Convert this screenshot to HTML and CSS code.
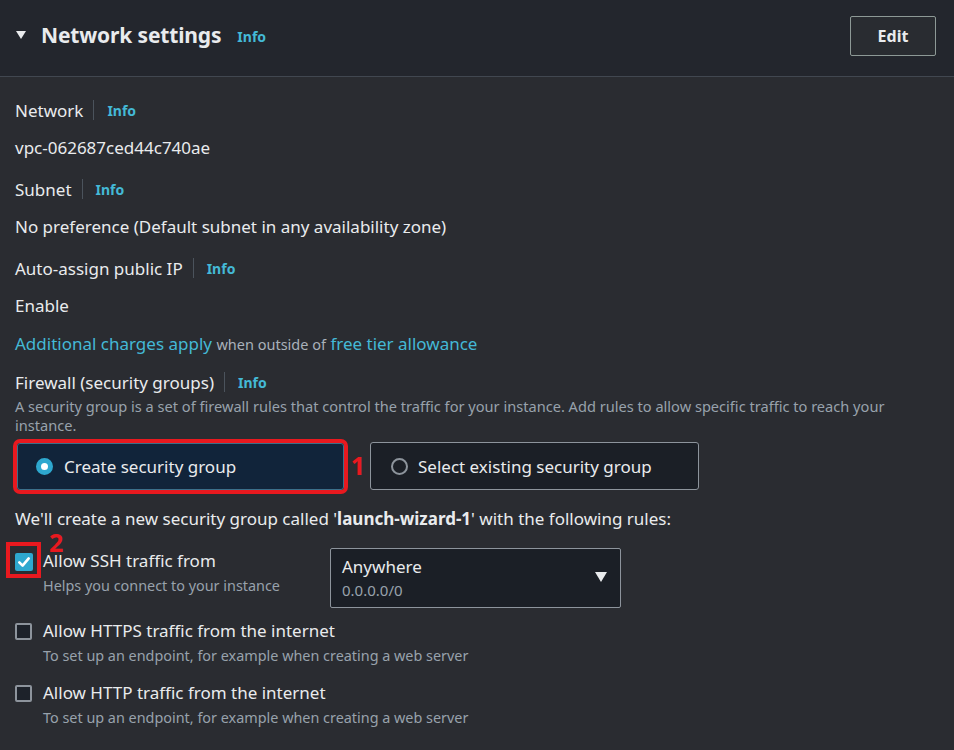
FILE: index.html
```html
<!DOCTYPE html>
<html>
<head>
<meta charset="utf-8">
<link rel="stylesheet" href="styles.css">
</head>
<body>
<div class="panel">
  <header class="head">
    <div class="title-wrap">
      <span class="caret-down"></span>
      <h2 class="title">Network settings</h2>
      <a class="info info-head">Info</a>
    </div>
    <button class="edit">Edit</button>
  </header>
  <div class="content">
    <div class="field">
      <div class="label-row"><span class="label">Network</span><span class="sep"></span><a class="info">Info</a></div>
      <div class="value">vpc-062687ced44c740ae</div>
    </div>
    <div class="field">
      <div class="label-row"><span class="label">Subnet</span><span class="sep"></span><a class="info">Info</a></div>
      <div class="value">No preference (Default subnet in any availability zone)</div>
    </div>
    <div class="field field-last">
      <div class="label-row"><span class="label">Auto-assign public IP</span><span class="sep"></span><a class="info">Info</a></div>
      <div class="value">Enable</div>
    </div>
    <div class="charges"><a class="link">Additional charges apply</a> <span class="small">when outside of</span> <a class="link">free tier allowance</a></div>
    <div class="fw">
      <div class="label-row"><span class="label">Firewall (security groups)</span><span class="sep"></span><a class="info">Info</a></div>
      <div class="desc">A security group is a set of firewall rules that control the traffic for your instance. Add rules to allow specific traffic to reach your instance.</div>
    </div>
    <div class="tiles">
      <div class="tile tile-on">
        <span class="radio radio-on"></span><span class="tile-text">Create security group</span>
        <span class="mark mark-1">1</span>
      </div>
      <div class="tile tile-off">
        <span class="radio"></span><span class="tile-text">Select existing security group</span>
      </div>
    </div>
    <p class="create-note">We'll create a new security group called '<b>launch-wizard-1</b>' with the following rules:</p>
    <div class="rule rule-ssh">
      <div class="check-row check-ssh">
        <span class="cb cb-on"><svg width="18" height="18" viewBox="0 0 18 18"><path d="M4.3 9.3 L7.6 12.6 L13.7 5.4" fill="none" stroke="#fff" stroke-width="2.6" stroke-linecap="round" stroke-linejoin="round"/></svg><span class="redbox"></span><span class="mark mark-2">2</span></span>
        <div class="rule-text">
          <div class="rule-label">Allow SSH traffic from</div>
          <div class="rule-desc">Helps you connect to your instance</div>
        </div>
      </div>
      <div class="select">
        <div class="sel-text">
          <div class="sel-main">Anywhere</div>
          <div class="sel-sub">0.0.0.0/0</div>
        </div>
        <span class="sel-caret"></span>
      </div>
    </div>
    <div class="rule rule-https">
      <div class="check-row">
        <span class="cb"></span>
        <div class="rule-text">
          <div class="rule-label">Allow HTTPS traffic from the internet</div>
          <div class="rule-desc">To set up an endpoint, for example when creating a web server</div>
        </div>
      </div>
    </div>
    <div class="rule rule-http">
      <div class="check-row">
        <span class="cb"></span>
        <div class="rule-text">
          <div class="rule-label">Allow HTTP traffic from the internet</div>
          <div class="rule-desc">To set up an endpoint, for example when creating a web server</div>
        </div>
      </div>
    </div>
  </div>
</div>
</body>
</html>
```
FILE: styles.css
```css
* { box-sizing: border-box; }
html, body { margin: 0; padding: 0; }
body {
  background: #2a2c31;
  font-family: "Noto Sans", "Open Sans", sans-serif;
  color: #e9ebed;
  width: 954px;
  height: 750px;
  overflow: hidden;
}
.panel { width: 954px; }
.head {
  height: 77px;
  background: #23262d;
  border-bottom: 1px solid #414750;
  display: flex;
  align-items: flex-start;
  justify-content: space-between;
  padding: 16px 18px 0 16px;
}
.title-wrap { display: flex; align-items: center; height: 38px; }
.caret-down {
  width: 0; height: 0;
  border-left: 5.5px solid transparent;
  border-right: 5.5px solid transparent;
  border-top: 8px solid #e9ebed;
  margin-right: 15px;
  margin-top: -1px;
}
.title {
  margin: 0;
  font-size: 21px;
  font-weight: 700;
  color: #e9ebed;
  letter-spacing: -0.15px;
}
.info {
  color: #44b9d6;
  font-weight: 700;
  font-size: 14px;
}
.info-head { margin-left: 16px; margin-top: 3px; }
.edit {
  width: 86px;
  height: 40px;
  background: #292c31;
  border: 1px solid #8d9996;
  border-radius: 2px;
  color: #e9ebed;
  font-family: inherit;
  font-weight: 700;
  font-size: 16px;
  padding: 0;
}
.content { padding: 21px 18px 0 15px; }
.field { padding-bottom: 3px; }
.field-last { padding-bottom: 0; }
.label-row { display: flex; align-items: center; height: 24px; }
.label { font-size: 17px; color: #e9ebed; }
.sep { width: 1px; height: 20px; background: #4b535c; margin: 0 13px 0 10px; }
.value { font-size: 17px; line-height: 24px; margin-top: 14px; margin-bottom: 14px; }
.charges { font-size: 17px; line-height: 24px; margin-bottom: 14px; }
.link { color: #44b9d6; }
.small { font-size: 14.5px; color: #a9b1ba; }
.fw .desc { font-size: 14.6px; line-height: 19px; color: #98a2ac; margin-top: 3px; }
.tiles { display: flex; gap: 26px; margin-top: 7px; }
.tile {
  position: relative;
  display: flex;
  align-items: center;
  border-radius: 3px;
  font-size: 17px;
}
.tile-on {
  background: #11243a;
  border: 1px solid #3b6f8a;
  outline: 4px solid #e8191f;
  outline-offset: 0px;
  width: 327px;
  height: 47px;
  margin-left: 2px;
  margin-top: 1px;
  padding-left: 18px;
}
.tile-off {
  background: #1b1f26;
  border: 1px solid #8d949c;
  width: 329px;
  height: 48px;
  padding-left: 20px;
}
.radio {
  width: 17px; height: 17px;
  border-radius: 50%;
  border: 2px solid #8d949c;
  margin-right: 10px;
  flex: none;
}
.radio-on {
  border: 5px solid #2ea8cf;
  background: #fff;
  margin-right: 11px;
}
.tile-text { color: #e9ebed; }
.mark {
  position: absolute;
  color: #e8191f;
  font-weight: 700;
  font-size: 25px;
  line-height: 1;
}
.mark-1 { right: -22px; top: 9px; }
.create-note { margin: 17px 0 0 0; font-size: 17px; line-height: 24px; }
.create-note b { font-weight: 700; }
.rule { display: flex; }
.rule-ssh { margin-top: 17px; }
.rule-https { margin-top: 10px; }
.rule-http { margin-top: 14px; }
.check-row { display: flex; align-items: flex-start; padding-top: 1px; }
.check-ssh { width: 315px; flex: none; }
.cb {
  position: relative;
  width: 17px; height: 17px;
  border: 2px solid #8d949c;
  border-radius: 2px;
  background: #1d222a;
  margin-top: 4px;
  margin-right: 11px;
  flex: none;
}
.cb-on {
  width: 18px; height: 18px;
  border: none;
  background: #2ea8cf;
  margin-right: 10px;
}
.cb-on svg { display: block; }
.redbox {
  position: absolute;
  left: -9px;
  top: -11px;
  width: 35px;
  height: 36px;
  border: 4px solid #e8191f;
}
.mark-2 { left: 34px; top: -20px; line-height: 18px; }
.rule-label { font-size: 17px; line-height: 24px; }
.rule-desc { font-size: 14.4px; color: #98a2ac; line-height: 20px; margin-top: 3px; }
.select {
  width: 291px;
  height: 60px;
  background: #1b1f26;
  border: 1px solid #8d949c;
  border-radius: 2px;
  display: flex;
  align-items: center;
  justify-content: space-between;
  padding: 0 13px 0 11px;
}
.sel-main { font-size: 17px; line-height: 22px; }
.sel-sub { font-size: 15px; color: #98a2ac; line-height: 20px; margin-top: 2px; }
.sel-caret {
  width: 0; height: 0;
  border-left: 6.5px solid transparent;
  border-right: 6.5px solid transparent;
  border-top: 10px solid #e9ebed;
  margin-top: -2px;
}
```
